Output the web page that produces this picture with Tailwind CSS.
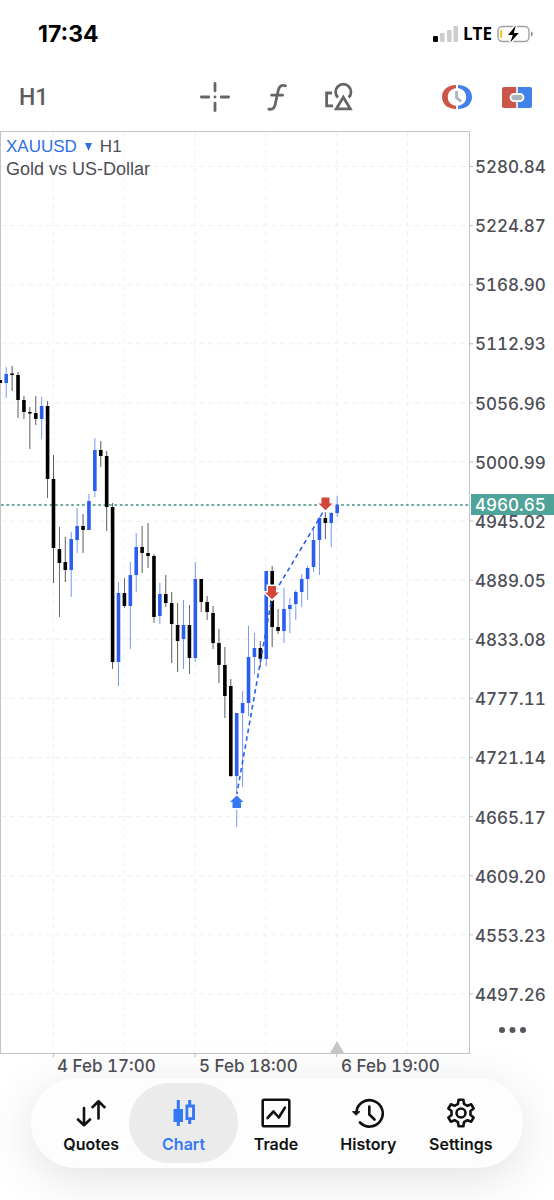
<!DOCTYPE html>
<html lang="en">
<head>
    <meta charset="UTF-8">
    <meta name="viewport" content="width=device-width, initial-scale=1.0">
    <title>XAUUSD H1</title>
    <script src="https://cdn.jsdelivr.net/npm/@tailwindcss/browser@4"></script>
</head>
<body class="min-h-screen overflow-x-hidden bg-white font-['Inter',sans-serif] text-[#4e4e56]">

    <!-- Status bar -->
    <div class="flex h-[68px] items-center justify-between pl-[38px] pr-[21px] text-black">
        <span class="text-[23px] font-bold leading-6">17:34</span>
        <div class="flex items-center gap-[5px]">
            <svg class="h-4 w-[26px]" viewBox="0 0 26 16">
                <rect x="1" y="10" width="5" height="6" rx="1.2" fill="#000" />
                <rect x="8" y="7" width="4.600" height="9" rx="1.2" fill="#cdcdcd" />
                <rect x="15" y="4" width="4.600" height="12" rx="1.2" fill="#cdcdcd" />
                <rect x="21.400" y="0" width="4.600" height="16" rx="1.2" fill="#cdcdcd" />
            </svg>
            <span class="font-['Open_Sans',sans-serif] text-[17px] font-bold leading-5">LTE</span>
            <svg class="h-[18px] w-9" viewBox="0 0 36 18">
                <rect x="1" y="1.5" width="31" height="15" rx="4.5" fill="none" stroke="#a0a0a4" stroke-width="1.4" />
                <path d="M34 6.500c1.300.6 1.800 1.500 1.800 2.500s-.5 1.900-1.800 2.500z" fill="#8e8e92" />
                <rect x="3" y="5" width="2.400" height="8" rx="1" fill="#f2cf3a" />
                <path d="M18.800 0.500 11 10h4.800L13.300 17.500 21.800 8h-5z" fill="#000" stroke="#fff" stroke-width="3" paint-order="stroke" />
            </svg>
        </div>
    </div>

    <!-- Toolbar -->
    <div class="mb-[5px] grid h-[58px] grid-cols-[1fr_auto_1fr] items-center">
        <button class="justify-self-start pl-[19px] pt-px font-['Roboto',sans-serif] text-[23px] font-medium leading-8 text-[#5e5e5e]">H1</button>
        <div class="flex items-center">
            <button class="flex w-[62px] justify-center" aria-label="Crosshair">
                <svg class="size-8" viewBox="0 0 32 32" fill="none" stroke="#666" stroke-width="2.800" stroke-linecap="round">
                    <path d="M16 2.400v7.400M16 22.200v7.400M2.400 16h7.400M22.200 16h7.400M16 16h.01" />
                </svg>
            </button>
            <button class="flex w-[62px] justify-center" aria-label="Indicators">
                <svg class="size-8" viewBox="0 0 32 32" fill="none" stroke="#666" stroke-width="2.800" stroke-linecap="round" stroke-linejoin="round">
                    <path d="M24.500 4.800c-4-1.200-6.300.2-7.200 4.200l-3.100 14.500c-.8 3.900-2.500 5.400-6.400 4.600M10.600 14.200h11" />
                </svg>
            </button>
            <button class="flex w-[62px] justify-center" aria-label="Objects">
                <svg class="size-8" viewBox="0 0 32 32" fill="none" stroke="#666" stroke-width="2.800">
                    <path d="M9 12H3.600v12.800H10" />
                    <path d="M14.900 16.400a7.700 7.700 0 1 1 10.800 0" />
                    <path d="M20.300 16.300 13.300 27.800h14z" />
                </svg>
            </button>
        </div>
        <div class="flex items-center justify-self-end pr-[7px]">
            <button class="flex w-[60px] justify-center" aria-label="Trading sessions">
                <svg class="h-6 w-[30px]" viewBox="0 0 30 24">
                    <path d="M14 0C5.500 0 0 5 0 12s5.500 12 14 12v-3.200C9 20.200 5.800 17 5.800 12S9 3.800 14 3.200z" fill="#cb5549" />
                    <path d="M16 0c8.500 0 14 5 14 12s-5.500 12-14 12v-3.200c5-.6 8.200-3.800 8.200-8.800S21 3.800 16 3.200z" fill="#4381ea" />
                    <path d="M14.600 6v6.500l4.400 4" fill="none" stroke="#adb6bf" stroke-width="3" />
                </svg>
            </button>
            <button class="flex w-[60px] justify-center" aria-label="One click trading">
                <svg class="h-[21px] w-[30px]" viewBox="0 0 30 21">
                    <path d="M2 0h12.200v21H2a2 2 0 0 1-2-2V2a2 2 0 0 1 2-2z" fill="#cb5549" />
                    <path d="M15.800 0H28a2 2 0 0 1 2 2v17a2 2 0 0 1-2 2H15.800z" fill="#4381ea" />
                    <rect x="8.500" y="6.800" width="13" height="7.400" rx="3.700" fill="#adb6bf" stroke="#fff" stroke-width="1.800" />
                </svg>
            </button>
        </div>
    </div>

    <!-- Chart -->
    <main class="flex">
        <div class="relative flex-1 border border-[#c4c4c4]">
            <svg id="plot" class="block w-full overflow-visible" viewBox="1 132 468 921">
                <g id="grid" stroke="#f0f0f0" stroke-width="1" stroke-dasharray="5 4"></g>
                <g id="ticks" stroke="#bdbdbd" stroke-width="1"></g>
                <path d="M1 505h468" stroke="#3b8d83" stroke-width="1.300" stroke-dasharray="2.700 2.700" />
                <g id="candles"></g>
                <path d="M236.500 796 272 597 325.500 508" fill="none" stroke="#2b62ea" stroke-width="1.600" stroke-dasharray="4.500 3.500" />
                <g stroke="#fff" stroke-width="3" paint-order="stroke">
                    <path d="M236.700 795.500 243.500 802h-2.500v6h-8.500v-6H230z" fill="#3478f6" />
                    <path d="M272 599.300 279 592.500h-3v-6.500h-8v6.500h-3z" fill="#d3473a" />
                    <path d="M325.500 510.300 332.500 503.500h-3v-6h-8v6h-3z" fill="#d3473a" />
                </g>
                <path d="M337 1041l7 12h-14z" fill="#c6c6c6" />
            </svg>
            <div class="absolute left-[5px] top-1 font-['Liberation_Sans',sans-serif] text-[17px] leading-[22px]">
                <div class="flex items-center gap-2">
                    <button class="flex items-center gap-2 text-[#2f6fe4]">
                        XAUUSD
                        <svg class="h-2 w-[7px]" viewBox="0 0 7 8" fill="currentColor"><path d="M0 0h7L3.500 8z" /></svg>
                    </button>
                    <span>H1</span>
                </div>
                <p class="text-[18px]">Gold vs US-Dollar</p>
            </div>
        </div>

        <!-- Price axis -->
        <div class="relative flex w-[84px] flex-col pl-[5px] pt-[30px] tabular-nums">
            <div id="prices" class="flex flex-1 flex-col justify-between text-[17px] font-medium leading-3"></div>
            <div class="absolute left-px right-0 top-[363px] flex h-[21px] items-center bg-[#4fa398] pl-1 text-[17px] font-medium leading-3 text-white">4960.65</div>
            <button class="flex h-[53px] items-center justify-center pr-1 pt-[5px]" aria-label="More">
                <svg class="h-[6px] w-[27px]" viewBox="0 0 27 6" fill="#55555c">
                    <circle cx="3" cy="3" r="3" />
                    <circle cx="13.500" cy="3" r="3" />
                    <circle cx="24" cy="3" r="3" />
                </svg>
            </button>
        </div>
    </main>

    <!-- Time axis -->
    <div class="flex h-6 pl-[57px] text-[17px] font-medium leading-6 tabular-nums">
        <span class="w-[142px]">4 Feb 17:00</span>
        <span class="w-[142px]">5 Feb 18:00</span>
        <span class="w-[142px]">6 Feb 19:00</span>
    </div>

    <!-- Tab bar -->
    <nav class="mx-[31px] mb-8 grid grid-cols-5 rounded-[45px] bg-[#fdfdfd] pb-[5px] pl-[14px] pr-4 pt-[5px] text-[16px] font-semibold leading-5 text-[#111] shadow-[0_10px_50px_rgba(0,0,0,0.12)]">
        <a href="#" class="flex h-20 flex-col items-center gap-[6px] pt-[15px]">
            <svg class="size-[30px]" viewBox="0 0 30 30" fill="none" stroke="currentColor" stroke-width="2.600" stroke-linecap="round" stroke-linejoin="round">
                <path d="M8 10v17M2 21.500 8 27.200l6-5.700M22.500 20.500V3.500M16.500 9.200l6-5.900 6 5.900" />
            </svg>
            Quotes
        </a>
        <a href="#" class="-mx-2 flex h-20 flex-col items-center gap-[6px] rounded-[40px] bg-[#ebebeb] pt-[15px] text-[#3478f6]">
            <svg class="size-[30px]" viewBox="0 0 30 30" fill="currentColor">
                <path d="M7.800 2h3v9h3.200v13h-3.200v4h-3v-4H4.500V11h3.300z" />
                <path fill-rule="evenodd" d="M19.200 2h3v4.500h3.800V22h-3.800v4h-3v-4H16.500V6.500h2.700zM19.300 9.400v9.800h3.800V9.400z" />
            </svg>
            Chart
        </a>
        <a href="#" class="flex h-20 flex-col items-center gap-[6px] pt-[15px]">
            <svg class="size-[30px]" viewBox="0 0 30 30" fill="none" stroke="currentColor" stroke-width="2.600" stroke-linecap="round" stroke-linejoin="round">
                <rect x="1.700" y="1.700" width="26.600" height="26.600" rx="1.500" />
                <path d="M6.500 20 12.500 13.500l5.300 6L24 9.500" />
            </svg>
            Trade
        </a>
        <a href="#" class="flex h-20 flex-col items-center gap-[6px] pt-[15px]">
            <svg class="h-[30px] w-8" viewBox="0 0 32 30" fill="none" stroke="currentColor" stroke-width="2.600" stroke-linecap="round" stroke-linejoin="round">
                <path d="M4.400 14A13.200 13.200 0 1 1 8 24.500" />
                <path d="M17.300 8.500v8l5.200 5" />
                <path d="M.800 13.700h7L4.300 17z" fill="currentColor" stroke-width="1" />
            </svg>
            History
        </a>
        <a href="#" class="flex h-20 flex-col items-center gap-[6px] pt-[15px]">
            <svg class="size-[30px]" viewBox="-15 -15 30 30" fill="none" stroke="currentColor" stroke-width="2.600" stroke-linejoin="round">
                <path d="M-3-9.200-2.400-13.200H2.400L3-9.200 6.470-7.200 10.230-8.680 12.630-4.520 9.470-2V2L12.630 4.520 10.230 8.680 6.470 7.200 3 9.200 2.400 13.200H-2.400L-3 9.200-6.470 7.200-10.230 8.680-12.630 4.520-9.470 2V-2L-12.630-4.520-10.230-8.680-6.470-7.200z" />
                <circle r="4.500" />
            </svg>
            Settings
        </a>
    </nav>

    <script>
        const UP = '#2b5eee';
        const DOWN = '#000000';

        // [direction, body top, body bottom, high, low]
        const candles = [
            ['d', 380, 383, 380, 383], ['u', 374, 383, 367, 398], ['d', 373.5, 375, 366, 391], ['d', 375, 400, 372, 418],
            ['d', 400, 412, 396, 419], ['d', 412, 413.5, 407, 449], ['d', 413, 419, 396, 425], ['u', 406, 419, 397, 439],
            ['d', 406, 479, 401, 498], ['d', 479, 548, 455, 583], ['d', 549, 563, 527, 617], ['d', 562, 570, 537, 582],
            ['u', 539, 570, 532, 597], ['u', 526, 540, 508, 553], ['d', 526, 530, 514, 553], ['u', 501, 530, 494, 530],
            ['u', 450, 491, 438, 497], ['d', 450, 456, 441, 467], ['d', 456, 507, 451, 531], ['d', 507, 662, 503, 669],
            ['u', 593, 662, 582, 686], ['d', 593, 606, 578, 608], ['u', 575, 606, 562, 649], ['u', 547, 575, 533, 592],
            ['d', 547, 553, 526, 573], ['d', 553, 556, 523, 568], ['d', 556, 617, 554, 623], ['u', 594, 616, 583, 624],
            ['d', 594, 603, 575, 607], ['d', 603, 624, 592, 663], ['d', 625, 641, 603, 672], ['u', 625, 639, 600, 669],
            ['d', 625, 658, 605, 674], ['u', 579, 658, 562, 662], ['d', 579, 602, 579, 612], ['d', 602, 612, 596, 620],
            ['d', 613, 643, 606, 649], ['d', 643, 665, 629, 683], ['d', 665, 696, 647, 718], ['d', 686, 776, 679, 777],
            ['u', 713, 776, 713, 827], ['u', 703, 713, 691, 787], ['u', 657, 703, 626, 716], ['u', 648, 657, 633, 674],
            ['d', 648, 659, 641, 667], ['u', 571, 659, 571, 666], ['d', 571, 627, 566, 647], ['d', 627, 631, 609, 634],
            ['u', 609, 631, 588, 643], ['u', 605, 609, 598, 633], ['u', 592, 604, 590, 620], ['u', 579, 592, 574, 607],
            ['u', 568, 579, 566, 600], ['u', 540, 567, 530, 572], ['u', 518, 540, 517, 575], ['d', 518, 523, 512, 539],
            ['u', 513, 523, 512, 547], ['u', 505, 513, 496, 517]
        ];

        const prices = ['5280.84', '5224.87', '5168.90', '5112.93', '5056.96', '5000.99', '4945.02', '4889.05',
            '4833.08', '4777.11', '4721.14', '4665.17', '4609.20', '4553.23', '4497.26'];

        let grid = '';
        let ticks = '';
        for (let i = 0; i < 6; i++) {
            const x = 53.3 + i * 70.85;
            grid += `<path d="M${x} 132V1053" />`;
            if (i % 2 === 0 && i < 5) ticks += `<path d="M${x} 1053v4" />`;
        }
        prices.forEach((price, i) => {
            const y = 166.5 + i * 59.1;
            grid += `<path d="M1 ${y}H469" />`;
            ticks += `<path d="M469 ${y}h4" />`;
        });
        document.getElementById('grid').innerHTML = grid;
        document.getElementById('ticks').innerHTML = ticks;

        document.getElementById('candles').innerHTML = candles.map(([dir, top, bottom, high, low], i) => {
            const x = 0.3 + i * 5.91;
            const color = dir === 'u' ? UP : DOWN;
            return `
                <path d="M${x} ${high}V${low}" stroke="${color}" stroke-width="0.8" opacity="0.8" />
                <rect x="${x - 1.8}" y="${top}" width="3.6" height="${bottom - top}" fill="${color}" />
            `;
        }).join('');

        document.getElementById('prices').innerHTML = prices.map(price => `<span>${price}</span>`).join('');
    </script>
</body>
</html>
